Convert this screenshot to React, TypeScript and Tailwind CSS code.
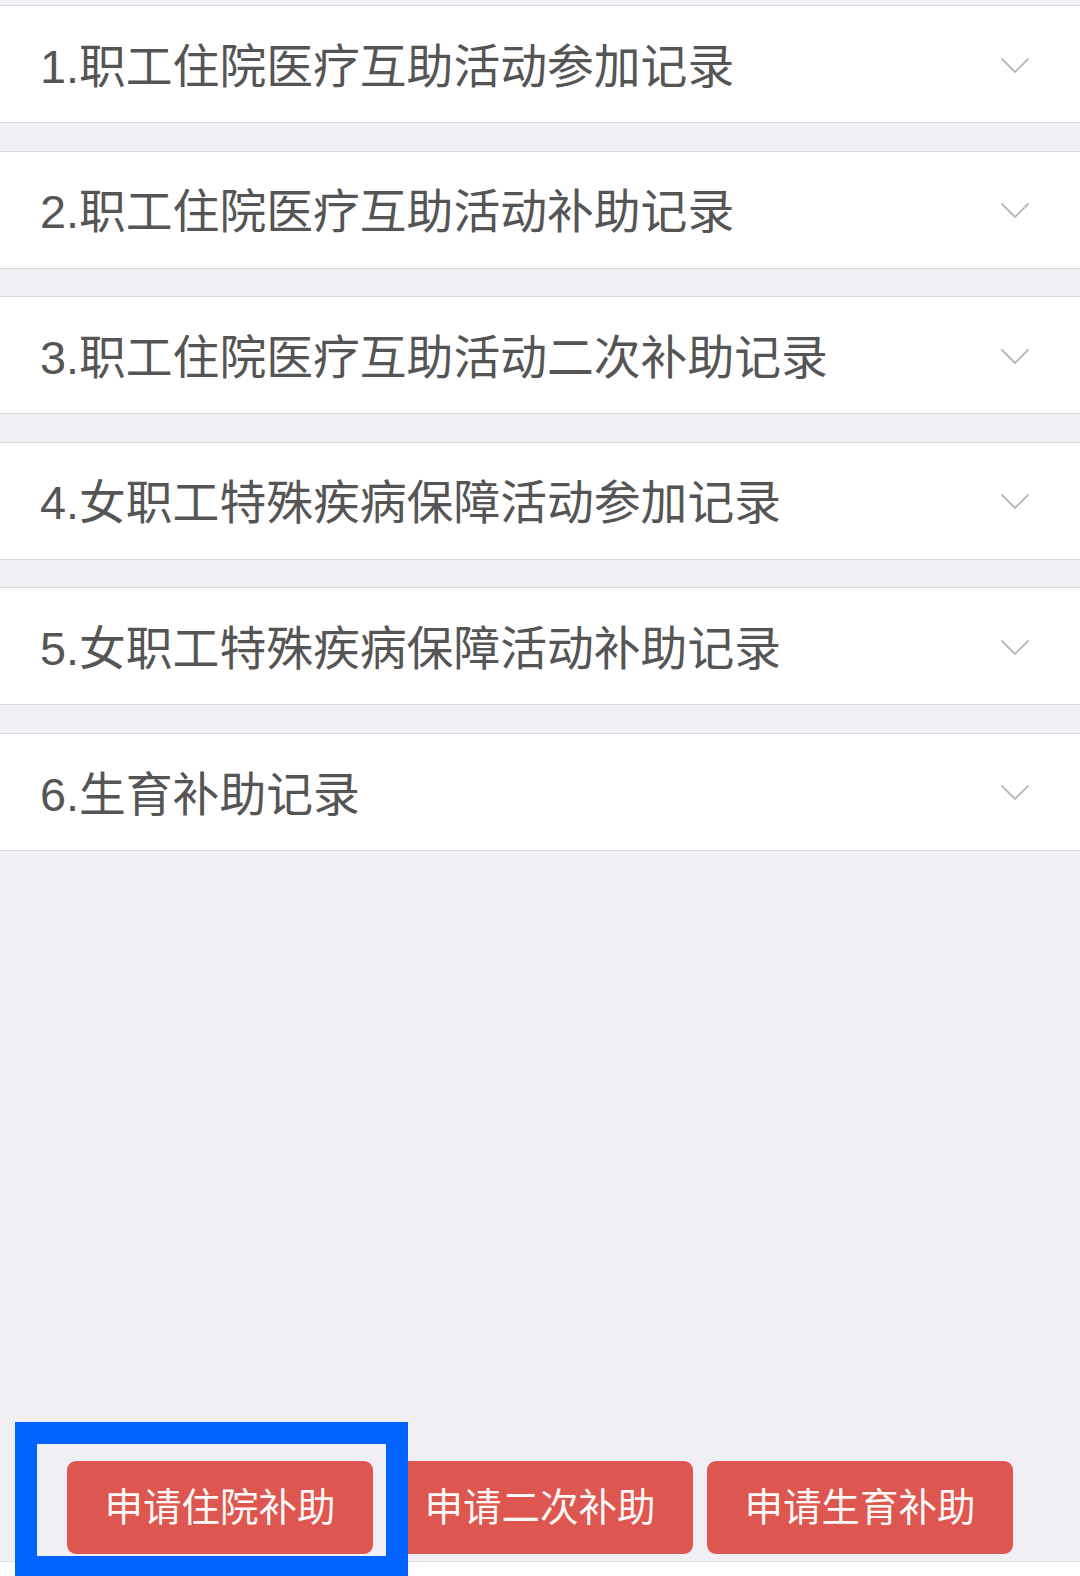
const records = [
  '1.职工住院医疗互助活动参加记录',
  '2.职工住院医疗互助活动补助记录',
  '3.职工住院医疗互助活动二次补助记录',
  '4.女职工特殊疾病保障活动参加记录',
  '5.女职工特殊疾病保障活动补助记录',
  '6.生育补助记录',
];

const actions = ['申请住院补助', '申请二次补助', '申请生育补助'];

function Chevron() {
  return (
    <svg width="30" height="18" viewBox="0 0 30 18" fill="none" className="mt-[3px] shrink-0">
      <polyline points="2,2 15,15 28,2" stroke="#b8b8b8" strokeWidth="1.8" strokeLinecap="round" strokeLinejoin="round" />
    </svg>
  );
}

export default function App() {
  return (
    <div
      className="relative flex min-h-[1576px] flex-col overflow-hidden bg-[#efeff4]"
      style={{ fontFamily: '"Liberation Sans", "Noto Sans CJK SC", sans-serif' }}
    >
      <div className="pt-[5px]">
        {records.map((title, i) => (
          <div
            key={title}
            className={`flex h-[118px] items-center justify-between border-y border-[#d9d9dc] bg-white pl-[40px] pr-[50px] ${i > 0 ? 'mt-[27.6px]' : ''}`}
          >
            <span className="mt-[6px] text-[46.8px] leading-none text-[#555555]">{title}</span>
            <Chevron />
          </div>
        ))}
      </div>

      <div className="flex-1" />

      <div className="flex justify-center gap-[14px] pb-[7px]">
        {actions.map((label) => (
          <button
            key={label}
            className="flex h-[93px] w-[306px] items-center justify-center rounded-[9px] bg-[#dd5650] pt-[2px] text-[38.5px] leading-none text-[#fff8f6]"
          >
            {label}
          </button>
        ))}
      </div>

      <div className="h-[15px] border-t border-[#e2e2e6] bg-white" />

      {/* highlight annotation */}
      <div className="pointer-events-none absolute left-[15px] top-[1422px] h-[154px] w-[393px] border-[22px] border-b-[20px] border-[#0062ff]" />
    </div>
  );
}
